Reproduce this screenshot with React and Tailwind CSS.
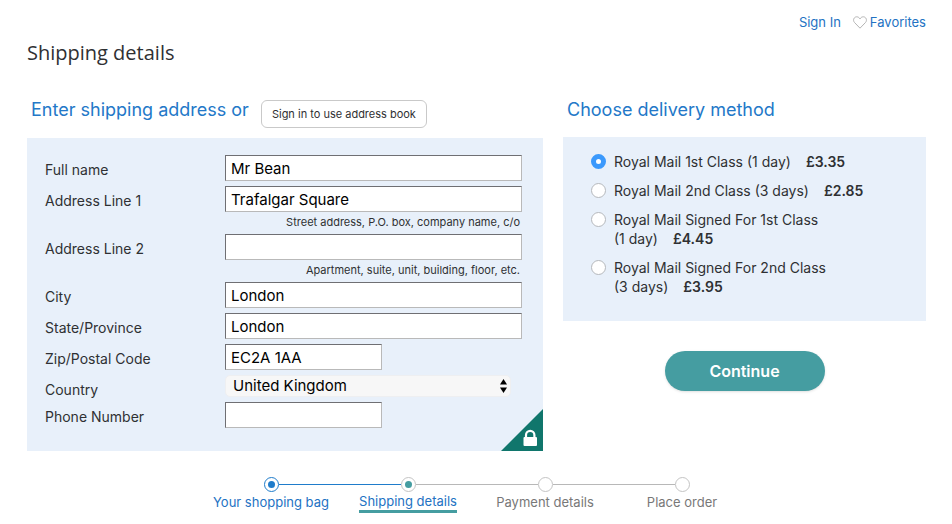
import { useState } from 'react'
import clsx from 'clsx'

const fields = [
  { id: 'fullName', label: 'Full name', value: 'Mr Bean' },
  { id: 'address1', label: 'Address Line 1', value: 'Trafalgar Square', hint: 'Street address, P.O. box, company name, c/o' },
  { id: 'address2', label: 'Address Line 2', value: '', hint: 'Apartment, suite, unit, building, floor, etc.' },
  { id: 'city', label: 'City', value: 'London' },
  { id: 'state', label: 'State/Province', value: 'London' },
  { id: 'zip', label: 'Zip/Postal Code', value: 'EC2A 1AA', short: true },
]

const methods = [
  { id: 'first', name: 'Royal Mail 1st Class', time: '(1 day)', price: '£3.35' },
  { id: 'second', name: 'Royal Mail 2nd Class', time: '(3 days)', price: '£2.85' },
  { id: 'signedFirst', name: 'Royal Mail Signed For 1st Class', time: '(1 day)', price: '£4.45' },
  { id: 'signedSecond', name: 'Royal Mail Signed For 2nd Class', time: '(3 days)', price: '£3.95' },
]

const steps = [
  { label: 'Your shopping bag', state: 'done' },
  { label: 'Shipping details', state: 'current' },
  { label: 'Payment details', state: 'todo' },
  { label: 'Place order', state: 'todo' },
]

const Field = ({ id, label, value, hint, short }) => (
  <div className="flex items-start">
    <label htmlFor={id} className="w-[180px] shrink-0 pt-1 text-sm leading-[22px]">{label}</label>
    <div className="min-w-0 flex-1">
      <input
        id={id}
        type="text"
        defaultValue={value}
        className={clsx(
          'block h-[26px] border border-t-[#6f6f73] border-r-[#b9b9b9] border-b-[#b9b9b9] border-l-[#6f6f73] bg-white px-[5px] text-[15px] text-black',
          short ? 'w-[157px]' : 'w-full'
        )}
      />
      {hint && <p className="h-[17px] pr-0.5 text-right text-[11px] leading-5">{hint}</p>}
    </div>
  </div>
)

const CountryField = () => (
  <div className="flex h-[22px] items-start">
    <label htmlFor="country" className="w-[180px] shrink-0 pt-1 text-sm leading-[22px]">Country</label>
    <div className="relative mr-[11px] flex-1">
      <select
        id="country"
        defaultValue="United Kingdom"
        className="block h-[22px] w-full appearance-none rounded-[5px] border border-[#eeeff1] bg-[#f7f7f7] px-[7px] text-[15px] leading-5 text-black"
      >
        <option>United Kingdom</option>
      </select>
      <svg className="pointer-events-none absolute top-1 right-1" width="7" height="14" viewBox="0 0 7 14" fill="black">
        <path d="M3.5 0 7 5.5H0z" />
        <path d="M3.5 14 0 8.5h7z" />
      </svg>
    </div>
  </div>
)

const SecureCorner = () => (
  <svg className="absolute right-0 bottom-0" width="42" height="42" viewBox="0 0 42 42">
    <path d="M42 0v42H0z" fill="#10766c" />
    <rect x="22.500" y="28" width="13.500" height="9" rx="1" fill="white" />
    <path d="M25 29v-3a4.200 4.200 0 0 1 8.400 0v3" fill="none" stroke="white" strokeWidth="2.2" />
  </svg>
)

const Stepper = () => (
  <ol className="mx-auto mt-[26px] flex w-full max-w-[548px] text-[13px]">
    {steps.map(({ label, state }, i) => {
      const before = i === 0 ? 'bg-transparent' : i === 1 ? 'bg-[#1f7ccb]' : 'bg-[#b8b8b8]'
      const after = i === 0 ? 'bg-[#1f7ccb]' : i === steps.length - 1 ? 'bg-transparent' : 'bg-[#b8b8b8]'
      return (
        <li key={label} className="flex flex-1 flex-col items-center">
          <div className="flex w-full items-center">
            <span className={clsx('h-px flex-1', before)} />
            <span
              className={clsx(
                'flex size-[15px] items-center justify-center rounded-full border bg-white',
                state === 'done' ? 'border-[#1f7ccb]' : 'border-[#c4c4c4]'
              )}
            >
              {state !== 'todo' && (
                <span className={clsx('size-[7px] rounded-full', state === 'done' ? 'bg-[#1f7ccb]' : 'bg-[#459da1]')} />
              )}
            </span>
            <span className={clsx('h-px flex-1', after)} />
          </div>
          {state === 'todo' ? (
            <span className="leading-5 whitespace-nowrap text-[#787878]">{label}</span>
          ) : (
            <a
              href="#"
              className={clsx(
                'whitespace-nowrap text-[#2372c3]',
                state === 'current' ? 'border-b-3 border-[#459da1] leading-[18px]' : 'leading-5'
              )}
            >
              {label}
            </a>
          )}
        </li>
      )
    })}
  </ol>
)

const App = () => {
  const [method, setMethod] = useState('first')

  return (
    <div className="min-h-screen bg-white pt-3 pr-[26px] pl-[27px] font-[Inter,sans-serif] text-[#2f3033]">
      <nav className="flex justify-end gap-3 text-[13px] leading-5 text-[#2372c3]">
        <a href="#">Sign In</a>
        <a href="#" className="flex items-center gap-[3px]">
          <svg width="14" height="13" viewBox="0 0 14 13" fill="none" stroke="#b4b4b4">
            <path d="M7 12.2 1.6 6.600C-.6 4.200 1 .8 3.700.8 5.300.8 6.400 1.800 7 3 7.600 1.800 8.700.8 10.300.8c2.700 0 4.300 3.400 2.100 5.800z" />
          </svg>
          Favorites
        </a>
      </nav>

      <h1 className="mt-[7px] font-['Open_Sans',sans-serif] text-xl leading-7">Shipping details</h1>

      <main className="mt-[29px] grid grid-cols-[516fr_363fr] gap-5">
        <section>
          <div className="flex h-[42px] items-start pl-1">
            <h2 className="text-lg leading-7 text-[#2378c8]">Enter shipping address or</h2>
            <button className="mt-1 ml-3 h-7 rounded-md border border-[#c9c9c9] px-2.5 text-[11px] whitespace-nowrap">
              Sign in to use address book
            </button>
          </div>
          <form className="relative flex flex-col gap-[5px] bg-[#e8f0fa] pt-[17px] pr-[21px] pb-[23px] pl-[18px]">
            {fields.map((field) => (
              <Field key={field.id} {...field} />
            ))}
            <CountryField />
            <Field id="phone" label="Phone Number" value="" short />
            <SecureCorner />
          </form>
        </section>

        <section>
          <h2 className="h-[41px] pl-1 text-lg leading-7 text-[#2378c8]">Choose delivery method</h2>
          <div className="flex flex-col gap-2.5 bg-[#e8f0fa] pt-[15px] pr-[60px] pb-[25px] pl-7">
            {methods.map(({ id, name, time, price }) => (
              <label key={id} className="flex items-start gap-2 text-sm leading-[19px]">
                <input
                  type="radio"
                  name="delivery"
                  checked={method === id}
                  onChange={() => setMethod(id)}
                  className="mt-0.5 size-[15px] shrink-0 appearance-none rounded-full border border-[#b5b8bc] bg-white checked:border-[5px] checked:border-[#3b99fc]"
                />
                <span>
                  {name}{' '}
                  <span className="whitespace-nowrap">
                    {time}
                    <strong className="ml-[15px] font-semibold">{price}</strong>
                  </span>
                </span>
              </label>
            ))}
          </div>
          <button className="mx-auto mt-[30px] block h-10 w-40 rounded-full bg-[#459da1] text-base font-semibold text-white shadow-sm">
            Continue
          </button>
        </section>
      </main>

      <Stepper />
    </div>
  )
}

export default App
